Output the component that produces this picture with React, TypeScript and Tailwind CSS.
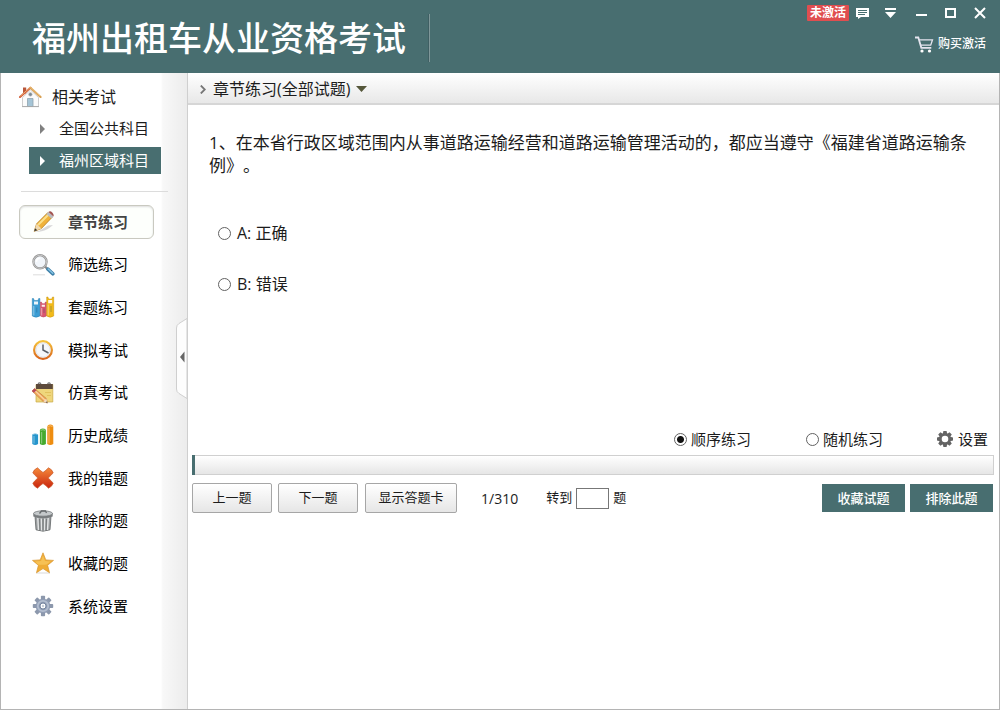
import { useState } from 'react';
import type { ReactNode } from 'react';

const iconClass = 'size-6 shrink-0';

function HomeIcon() {
  return (
    <svg viewBox="0 0 24 24" className="size-6 shrink-0" aria-hidden="true">
      <path d="M5 2.500h3.200v6H5z" fill="#b9573a" />
      <path d="M4.500 12.500 12.500 5 20.500 12.500V21.500h-16z" fill="#fbfbfb" stroke="#c2c2c2" strokeWidth=".8" />
      <path d="M9.500 13.500h5.500v8H9.500z" fill="#a5c4d6" stroke="#8fa3af" strokeWidth=".8" />
      <path d="M4 21.600h17" stroke="#a6a6a6" strokeWidth=".9" />
      <circle cx="12.400" cy="9.400" r="1.800" fill="#7d8891" stroke="#c4c4c4" strokeWidth=".6" />
      <path d="M2 12 12.400 2.800" stroke="#d2603a" strokeWidth="2.100" fill="none" strokeLinecap="round" />
      <path d="M12.400 2.800 22.600 12" stroke="#d9a052" strokeWidth="2.100" fill="none" strokeLinecap="round" />
      <path d="M2.500 11 12.400 2.200 22 10.900" stroke="#f4cb8c" strokeWidth=".7" fill="none" />
    </svg>
  );
}

function PencilIcon() {
  return (
    <svg viewBox="0 0 24 24" className={iconClass} aria-hidden="true">
      <path d="M3 22c7 .5 14-2 19-7l-5 .5L8 21z" fill="#d9d9d9" />
      <path d="M3.200 21.300 5.600 13.800 16.600 2.800l4.600 4.400L10.300 18.600z" fill="#f0b23a" stroke="#b57a1c" strokeWidth=".8" />
      <path d="M7 15 17.800 4.200" stroke="#fbe08a" strokeWidth="2" />
      <path d="M3.200 21.300 5.600 13.800l4.700 4.800z" fill="#f0d9ae" />
      <path d="M3.200 21.300 4.100 18.300l2.200 2z" fill="#333" />
      <path d="M15.400 4 17.400 2l5 4.600-2.100 1.800z" fill="#b9bcc0" />
      <path d="M17.400 2c1.200-1.200 2.600-.8 3.800.4s1.900 2.700 1.200 4.100z" fill="#a0524e" />
    </svg>
  );
}

function SearchIcon() {
  return (
    <svg viewBox="0 0 24 24" className={iconClass} aria-hidden="true">
      <path d="M2 21.800h12" stroke="#e2e2e2" strokeWidth="1.200" />
      <path d="m14 13.500 3 3" stroke="#888" strokeWidth="2.400" />
      <path d="m17 16.200 4.800 4.600" stroke="#3d7fa8" strokeWidth="3.600" strokeLinecap="round" />
      <path d="m17.200 15.900 4.600 4.400" stroke="#86c3e3" strokeWidth="1.400" strokeLinecap="round" />
      <circle cx="9" cy="8.800" r="6.600" fill="#f1f5fa" stroke="#949494" strokeWidth="2.200" />
      <circle cx="9" cy="8.800" r="6.600" fill="none" stroke="#d2d2d2" strokeWidth=".8" />
      <path d="M5.500 8.800c0-2.400 1.500-3.600 3.700-3.600" stroke="#fff" strokeWidth="1.600" fill="none" />
    </svg>
  );
}

function BooksIcon() {
  return (
    <svg viewBox="0 0 24 24" className={iconClass} aria-hidden="true">
      <path d="M1.300 3.500h1.200l.8 2h3.600l.8-2h1.200V21q-3.800 2.400-7.600 0z" fill="#3b9dd4" stroke="#2b7eb0" strokeWidth=".5" />
      <path d="M9.400 7h1l.6 1.700h2.800l.6-1.700h1V21q-3 2-6 0z" fill="#d9566f" stroke="#b43c55" strokeWidth=".5" />
      <path d="M15.700 2h1.200l.7 2h3.200l.7-2h1.200v19q-3.500 2.400-7 0z" fill="#f2ba18" stroke="#c9930c" strokeWidth=".5" />
      <path d="M3 6.500h4v3H3zM10.700 9.700h3.200v2h-3.200zM17.200 5h4v3.200h-4z" fill="#fff" opacity=".9" />
      <path d="M2.800 11v9.500M10.700 13v7.500M17.200 9.500v11" stroke="#fff" opacity=".45" />
      <path d="M5.800 12.500v5M13 13.500v4.500M20 11v6" stroke="#26516f" strokeWidth=".9" opacity=".4" />
    </svg>
  );
}

function ClockIcon() {
  return (
    <svg viewBox="0 0 24 24" className={iconClass} aria-hidden="true">
      <defs>
        <linearGradient id="clockRim" x1="0" y1="0" x2="0" y2="1">
          <stop offset="0" stopColor="#f6c33c" />
          <stop offset="1" stopColor="#d9651c" />
        </linearGradient>
      </defs>
      <circle cx="12" cy="12" r="8.900" fill="#f5f7fa" stroke="url(#clockRim)" strokeWidth="2.200" />
      <circle cx="12" cy="12" r="7" fill="none" stroke="#dde1e8" strokeWidth=".8" />
      <path d="M12 6.500V12l5.500 3" stroke="#5b5f66" strokeWidth="1.500" fill="none" />
    </svg>
  );
}

function NotepadIcon() {
  return (
    <svg viewBox="0 0 24 24" className={iconClass} aria-hidden="true">
      <path d="M5 3.500h16.800v17.500H5z" fill="#efd67c" stroke="#c9a945" strokeWidth=".7" />
      <path d="M5 3h16.800v5H5z" fill="#5d4a3c" />
      <path d="M7 2.800q1.500-2 3 0M16.500 2.800q1.500-2 3 0" stroke="#777" strokeWidth="1.200" fill="none" />
      <path d="M14 11.500h6M16 14.500h4" stroke="#e2c25e" />
      <path d="M1 10 3.500 7.500l11.800 10 1.200 4.600-4.200-1.500z" fill="#f0a65a" stroke="#b8733a" strokeWidth=".6" />
      <path d="m4.300 10 9.500 9" stroke="#fad6a4" strokeWidth="1.100" />
      <path d="M1 10 3.500 7.500l1.900 1.700-2.600 2.600z" fill="#b8475a" />
      <path d="m12.300 20.600 3-3.100 1.200 4.600z" fill="#f2dcc0" />
      <path d="m15 21.600.9-1.300.6 1.800z" fill="#333" />
    </svg>
  );
}

function ChartIcon() {
  return (
    <svg viewBox="0 0 24 24" className={iconClass} aria-hidden="true">
      <path d="M1.300 11.500q2.900-2 5.800 0V21q-2.900 2-5.800 0z" fill="#2595cc" />
      <path d="M8.900 7.500q0-2 3-2t3 2V21q-3 2-6 0z" fill="#45aa2e" />
      <path d="M16.300 4q0-2.500 3-2.500t3 2.500v17q-3 2-6 0z" fill="#ee8d10" />
      <path d="M3 13v7.500M10.600 9v11.500M18 4.500v16" stroke="#fff" strokeWidth="1.200" opacity=".35" />
      <path d="M2 11.500q2.300-1.400 4.500 0M9.700 7.400q2.200-1.500 4.400 0M17.100 3.500q2.200-1.500 4.400 0" stroke="#fff" opacity=".4" fill="none" />
    </svg>
  );
}

function CrossIcon() {
  return (
    <svg viewBox="0 0 24 24" className={iconClass} aria-hidden="true">
      <defs>
        <linearGradient id="crossFill" x1="0" y1="0" x2="0" y2="1">
          <stop offset="0" stopColor="#f58a3a" />
          <stop offset="1" stopColor="#c9240e" />
        </linearGradient>
      </defs>
      <path
        d="M6.500 1.800Q9 4.500 12 6.500q3-2 5.500-4.700 3.500 1.500 4.700 5-2.200 2.700-5 5.200 2.800 2.500 5 5.200-1.200 3.500-4.700 5-2.500-2.700-5.500-4.700-3 2-5.500 4.700-3.500-1.500-4.700-5 2.200-2.700 5-5.200Q4 9.500 1.800 6.800q1.200-3.500 4.700-5z"
        fill="url(#crossFill)"
        stroke="#c9582a"
        strokeWidth=".7"
      />
    </svg>
  );
}

function TrashIcon() {
  return (
    <svg viewBox="0 0 24 24" className={iconClass} aria-hidden="true">
      <path d="m4 7 1 13.800q7 2.800 14 0L20 7z" fill="#9c9fa1" stroke="#616466" strokeWidth=".8" />
      <path d="m6.800 9 .7 12M10.300 9.500l.2 12M13.700 9.500l-.2 12M17.200 9l-.7 12" stroke="#e3e5e6" strokeWidth="1.400" />
      <path d="m8.600 10 .4 11M12 10v11M15.400 10l-.4 11" stroke="#6b6e70" strokeWidth=".8" />
      <path d="M2.300 4.500 21.700 4v3.500q-9.700 3.500-19.400 0z" fill="#787c7e" />
      <ellipse cx="12" cy="4.500" rx="9.500" ry="2.700" fill="#c5c9cb" stroke="#777b7d" strokeWidth=".8" />
      <path d="M8.500 4.500 10.500 2h4l1 2" stroke="#666a6c" strokeWidth="1.300" fill="none" />
    </svg>
  );
}

function StarIcon() {
  return (
    <svg viewBox="0 0 24 24" className={iconClass} aria-hidden="true">
      <path d="M5 22h14" stroke="#e6e6e6" strokeWidth="1.500" />
      <path d="m12 1.800 2.800 7.100 7.700.5-5.900 4.900 1.900 7.400-6.500-4.100-6.500 4.100 1.900-7.400-5.900-4.900 7.700-.5z" fill="#efac36" stroke="#d8952c" strokeWidth=".7" />
      <path d="m12 4.500 2 5.400 5.500.5-4 3.200q-5 .5-8.500 0l-3-3.200 6-.5z" fill="#f9ca63" opacity=".7" />
    </svg>
  );
}

function SettingsIcon() {
  return (
    <svg viewBox="0 0 24 24" className={iconClass} aria-hidden="true">
      <g fill="#8c98ac">
        {[0, 45, 90, 135].map((a) => (
          <rect key={a} x="9.900" y="1.800" width="4.200" height="20.400" rx=".8" transform={`rotate(${a} 12 12)`} />
        ))}
      </g>
      <circle cx="12" cy="12" r="7.300" fill="#8f9cb3" />
      <circle cx="12" cy="12" r="5.200" fill="none" stroke="#b3bed0" strokeWidth="1.800" />
      <circle cx="12" cy="12" r="3" fill="#fff" stroke="#7585a0" />
      <circle cx="12" cy="12" r="1.200" fill="#c5cdd9" />
    </svg>
  );
}

function GearIcon() {
  return (
    <svg viewBox="0 0 18 18" className="size-[18px]" aria-hidden="true">
      <g fill="#646464">
        {[0, 45, 90, 135].map((a) => (
          <path key={a} d="M7.400 1h3.200l.6 3H6.800zM7.400 17h3.200l.6-3H6.800z" transform={`rotate(${a} 9 9)`} />
        ))}
      </g>
      <circle cx="9" cy="9" r="4.600" fill="none" stroke="#646464" strokeWidth="2.600" />
    </svg>
  );
}

const menu: { label: string; icon: ReactNode }[] = [
  { label: '章节练习', icon: <PencilIcon /> },
  { label: '筛选练习', icon: <SearchIcon /> },
  { label: '套题练习', icon: <BooksIcon /> },
  { label: '模拟考试', icon: <ClockIcon /> },
  { label: '仿真考试', icon: <NotepadIcon /> },
  { label: '历史成绩', icon: <ChartIcon /> },
  { label: '我的错题', icon: <CrossIcon /> },
  { label: '排除的题', icon: <TrashIcon /> },
  { label: '收藏的题', icon: <StarIcon /> },
  { label: '系统设置', icon: <SettingsIcon /> },
];

const subjects = ['全国公共科目', '福州区域科目'];

const radioClass =
  'size-[13px] shrink-0 appearance-none rounded-full border border-[#626262] bg-white checked:bg-[radial-gradient(circle,#111_3px,transparent_4px)]';
const plainButton =
  'h-[30px] rounded-xs border border-[#a6a6a6] bg-linear-to-b from-white to-[#e6e6e6] text-[13px]';
const tealButton = 'h-7 w-[83px] bg-[#486e70] pt-px text-[13px] font-medium text-white';

function TitleBar() {
  return (
    <header className="flex h-[73px] shrink-0 justify-between bg-[#486e70] pl-8 text-white">
      <div className="flex items-center gap-[22px] pt-[3px]">
        <h1 className="text-[34px] leading-[48px] font-medium">福州出租车从业资格考试</h1>
        <span className="h-12 w-0.5 border-l border-[#3f5f63] bg-[#7f9799]" />
      </div>
      <div className="flex flex-col items-end pt-[5px]">
        <div className="flex h-4 items-center pr-3.5">
          <span className="flex h-4 w-[42px] items-center justify-center rounded-[1px] bg-[#e04e50] text-[12px] leading-4 font-bold">未激活</span>
          <button type="button" aria-label="消息" className="ml-[7px]">
            <svg viewBox="0 0 13 12" className="h-3 w-[13px]">
              <path d="M0 1h13v9H5l-3 2v-2H0z" fill="#fff" />
              <path d="M2 3.500h9M2 5.500h9M2 7.500h7" stroke="#486e70" />
            </svg>
          </button>
          <button type="button" aria-label="菜单" className="ml-4">
            <svg viewBox="0 0 11 10" className="h-2.5 w-[11px]">
              <path d="M0 0h11v2H0zM0 4h11L5.500 10z" fill="#fff" />
            </svg>
          </button>
          <button type="button" aria-label="最小化" className="ml-5">
            <svg viewBox="0 0 11 11" className="size-[11px]"><path d="M0 6h11v2H0z" fill="#fff" /></svg>
          </button>
          <button type="button" aria-label="最大化" className="ml-[18px]">
            <svg viewBox="0 0 11 10" className="h-2.5 w-[11px]"><path d="M1 1h9v8H1z" fill="none" stroke="#fff" strokeWidth="2" /></svg>
          </button>
          <button type="button" aria-label="关闭" className="ml-[18px]">
            <svg viewBox="0 0 12 12" className="size-3"><path d="m1 1 10 10M11 1 1 11" stroke="#fff" strokeWidth="2" /></svg>
          </button>
        </div>
        <a href="#buy" className="mt-[13px] flex items-center gap-1 pr-3.5 text-[12px] leading-5 font-medium">
          <svg viewBox="0 0 19 17" className="h-[17px] w-[19px]" fill="none" stroke="#e4e4ee" aria-hidden="true">
            <path d="M0 1.500h3.300l3 10.300h10" strokeWidth="1.800" />
            <path d="M4 3.800h13.500l-1.800 5.400H5.700" strokeWidth="1.300" />
            <circle cx="7" cy="15" r="1.600" fill="#fff" stroke="none" />
            <circle cx="14.500" cy="15" r="1.600" fill="#fff" stroke="none" />
          </svg>
          购买激活
        </a>
      </div>
    </header>
  );
}

function Sidebar() {
  const [active, setActive] = useState('章节练习');
  const [subject, setSubject] = useState('福州区域科目');
  return (
    <aside className="relative w-[187px] shrink-0 border-r border-[#cfcfcf] bg-linear-to-r from-white from-86% via-[#f8f8f8] via-87% to-[#ececec]">
      <div className="flex items-center gap-2.5 pt-3 pl-[17px] text-[16px] leading-6">
        <HomeIcon />
        <h2>相关考试</h2>
      </div>
      <ul className="mt-1.5 ml-7 flex w-[132px] flex-col gap-[5px]">
        {subjects.map((s) => (
          <li key={s}>
            <button
              type="button"
              onClick={() => setSubject(s)}
              className={
                subject === s
                  ? 'flex h-[27px] w-full items-center gap-3.5 bg-[#486e70] pl-[11px] text-[15px] text-white'
                  : 'flex h-[27px] w-full items-center gap-3.5 pl-[11px] text-[15px]'
              }
            >
              <svg viewBox="0 0 5 10" className="h-2.5 w-[5px]" aria-hidden="true">
                <path d="M0 0 5 5 0 10z" fill={subject === s ? '#fff' : '#808080'} />
              </svg>
              {s}
            </button>
          </li>
        ))}
      </ul>
      <hr className="mt-[17px] ml-5 w-[147px] border-[#dcdcdc]" />
      <nav className="mt-[13px] ml-[18px] flex h-[418px] w-[135px] flex-col justify-between">
        {menu.map((m) => (
          <button
            key={m.label}
            type="button"
            onClick={() => setActive(m.label)}
            className={
              active === m.label
                ? 'flex h-[34px] items-center gap-[13px] rounded-md border border-[#c9c9c0] bg-[#fdfffc] pl-[11px] text-[15px] font-bold text-[#444] shadow-[inset_0_1px_2px_#ddd]'
                : 'flex h-[34px] items-center gap-[13px] rounded-md border border-transparent pl-[11px] text-[15px] text-black'
            }
          >
            {m.icon}
            {m.label}
          </button>
        ))}
      </nav>
      <button type="button" aria-label="收起侧栏" className="absolute top-[245px] right-0">
        <svg viewBox="0 0 11 81" className="h-[81px] w-[11px]">
          <path d="M11 .5 3 5.500Q.5 7 .5 10v61q0 3 2.500 4.500l8 5z" fill="#fdfdfd" stroke="#cfcfcf" />
          <path d="M8.500 33.500v11L4 39z" fill="#666" />
        </svg>
      </button>
    </aside>
  );
}

function Practice() {
  return (
    <main className="flex min-w-0 flex-1 flex-col">
      <div className="flex h-8 shrink-0 items-center border-b-2 border-[#d6d6d6] bg-linear-to-b from-white to-[#e8e8e8] pt-0.5 pl-3">
        <svg viewBox="0 0 6 9" className="mr-[7px] h-[9px] w-1.5" fill="none" aria-hidden="true">
          <path d="m.8.500 4 4-4 4" stroke="#777" strokeWidth="1.800" />
        </svg>
        <button type="button" className="flex items-center gap-1.5 text-[16px] leading-6">
          章节练习(全部试题)
          <svg viewBox="0 0 11 6" className="h-1.5 w-[11px]" aria-hidden="true"><path d="M0 0h11L5.500 6z" fill="#55573a" /></svg>
        </button>
      </div>
      <section className="min-h-80 px-[21px] pt-[26px]">
        <p className="text-[17px] leading-[23px] [text-spacing-trim:space-all]">
          1、在本省行政区域范围内从事道路运输经营和道路运输管理活动的，都应当遵守《福建省道路运输条例》。
        </p>
        <div className="mt-11 ml-[9px] flex flex-col items-start gap-[27px] text-[16px] leading-6">
          <label className="flex items-center gap-1.5"><input type="radio" name="answer" className={radioClass} />A: 正确</label>
          <label className="flex items-center gap-1.5"><input type="radio" name="answer" className={radioClass} />B: 错误</label>
        </div>
      </section>
      <div className="flex h-[30px] shrink-0 items-center justify-end pr-[11px] pb-0.5 text-[15px]">
        <label className="flex items-center gap-1"><input type="radio" name="order" defaultChecked className={radioClass} />顺序练习</label>
        <label className="ml-[55px] flex items-center gap-1"><input type="radio" name="order" className={radioClass} />随机练习</label>
        <button type="button" className="ml-[53px] flex items-center gap-1">
          <GearIcon />
          设置
        </button>
      </div>
      <div className="mr-[5px] ml-1 flex h-5 shrink-0 border border-l-0 border-[#d0d0d0] bg-linear-to-b from-white to-[#e6e6e6]">
        <div className="-my-px w-[3px] bg-[#486e70]" />
      </div>
      <div className="flex items-center pt-2 pr-1.5 pl-1">
        <button type="button" className={`${plainButton} w-20`}>上一题</button>
        <button type="button" className={`${plainButton} ml-1.5 w-20`}>下一题</button>
        <button type="button" className={`${plainButton} ml-[7px] w-[92px]`}>显示答题卡</button>
        <span className="ml-6 text-[14px]">1/310</span>
        <label className="ml-7 flex items-center gap-1 text-[13px]">
          转到
          <input type="text" aria-label="题号" className="h-[21px] w-[33px] border border-[#777] bg-white px-1" />
          题
        </label>
        <button type="button" className={`${tealButton} ml-auto`}>收藏试题</button>
        <button type="button" className={`${tealButton} ml-[5px]`}>排除此题</button>
      </div>
    </main>
  );
}

export default function App() {
  return (
    <div className="flex min-h-screen flex-col bg-white font-['Open_Sans','Noto_Sans_CJK_SC',sans-serif] text-[#1c1c1c]">
      <TitleBar />
      <div className="flex flex-1 border border-t-0 border-[#b4b4b4]">
        <Sidebar />
        <Practice />
      </div>
    </div>
  );
}
